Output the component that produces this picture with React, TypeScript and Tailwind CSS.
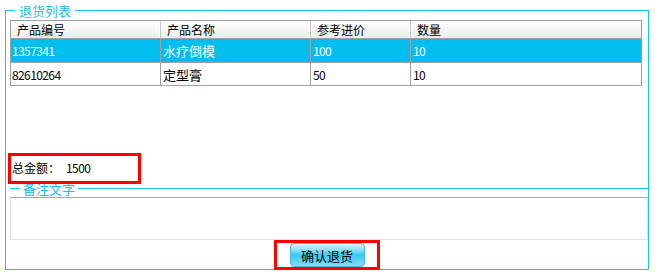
import React from 'react';

type Row = { code: string; name: string; price: string; qty: string };

const rows: Row[] = [
  { code: '1357341', name: '水疗倒模', price: '100', qty: '10' },
  { code: '82610264', name: '定型膏', price: '50', qty: '10' },
];

const headers = ['产品编号', '产品名称', '参考进价', '数量'];

export default function App() {
  return (
    <div
      className="relative w-[655px] h-[274px] bg-white text-[12px] leading-[15px] text-black overflow-hidden"
      style={{ fontFamily: '"Noto Sans CJK SC", "Liberation Sans", sans-serif' }}
    >
      <fieldset className="ml-[5px] mt-[3px] w-[643px] h-[267px] border border-[#1ac4f2] p-0 m-0">
        <legend className="ml-[9px] px-[4px] h-[15px] leading-[15px] text-[13px] text-[#1cbcec]">退货列表</legend>

        {/* list */}
        <div className="h-[135px] pt-[2px] pl-[4px]">
          <div className="w-[632px] border border-[#a0a0a0]">
            <div className="grid grid-cols-[150px_150px_100px_1fr] h-[18px] border-b border-[#a0a0a0] bg-gradient-to-b from-white to-[#ececec]">
              {headers.map((h, i) => (
                <div
                  key={h}
                  className={i < 3 ? 'pl-[6px] border-r border-[#c8c8c8] shadow-[inset_-1px_0_0_#ffffff] leading-[17px]' : 'pl-[6px] leading-[17px]'}
                >
                  {h}
                </div>
              ))}
            </div>
            {rows.map((r, idx) => (
              <div
                key={r.code}
                className={
                  idx === 0
                    ? 'grid grid-cols-[150px_150px_100px_1fr] h-[24px] border-b border-[#a0a0a0] bg-[#00bfee] text-white'
                    : 'grid grid-cols-[150px_150px_100px_1fr] h-[22px]'
                }
              >
                <div className="pl-[1px] border-r border-[#a0a0a0] flex items-center tracking-[-0.6px]">{r.code}</div>
                <div className="pl-[2px] border-r border-[#a0a0a0] flex items-center text-[13px]">{r.name}</div>
                <div className="pl-[2px] border-r border-[#a0a0a0] flex items-center tracking-[-0.6px]">{r.price}</div>
                <div className="pl-[2px] flex items-center tracking-[-0.6px]">{r.qty}</div>
              </div>
            ))}
          </div>
        </div>

        {/* total */}
        <div className="h-[28px] pl-[6px] flex items-center">
          <span>总金额：</span>
          <span className="ml-[6px] tracking-[-0.6px]">1500</span>
        </div>

        {/* remark */}
        <fieldset className="relative ml-[4px] w-[638px] border-0 border-t border-[#1ac4f2] bg-white p-0 m-0">
          <legend className="ml-[10px] px-[3px] h-[15px] leading-[15px] text-[13px] text-[#1cbcec]">备注文字</legend>
          <textarea className="block mt-[1px] w-[638px] h-[43px] resize-none border border-[#e2e2e6] border-t-[#a4a4a4] bg-white outline-none" />
        </fieldset>

        <div className="flex justify-center pt-[3px]">
          <button className="w-[75px] h-[24px] rounded-[4px] border border-[#4fb6dc] bg-gradient-to-b from-[#d6f6ff] via-[#2ccaf2] to-[#7fdcf8] text-[13px] text-black leading-none">
            确认退货
          </button>
        </div>
      </fieldset>

      {/* annotation boxes */}
      <div className="absolute left-[8px] top-[153px] w-[133px] h-[31px] border-[3px] border-[#ff0000]" />
      <div className="absolute left-[274px] top-[240px] w-[106px] h-[30px] border-[3px] border-[#ff0000]" />
    </div>
  );
}
